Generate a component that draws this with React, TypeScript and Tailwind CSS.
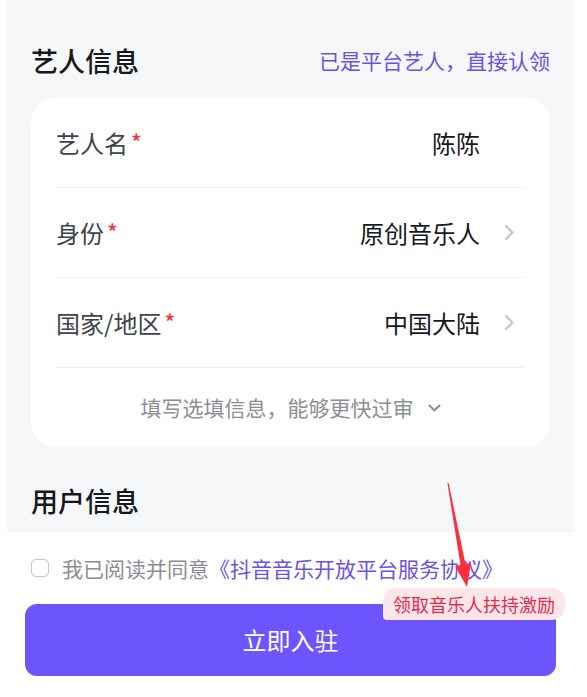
import React from 'react';

const font = { fontFamily: '"Noto Sans CJK SC", "Noto Sans", sans-serif' };

const ChevronRight = () => (
  <svg width="11" height="17" viewBox="0 0 11 17" fill="none">
    <path d="M2 2l6.5 6.5L2 15" stroke="#c4c7cc" strokeWidth="2.4" strokeLinecap="round" strokeLinejoin="round" />
  </svg>
);

const ChevronDown = () => (
  <svg width="13" height="8" viewBox="0 0 13 8" fill="none">
    <path d="M1.5 1.5l5 5 5-5" stroke="#8b8e93" strokeWidth="2" strokeLinecap="round" strokeLinejoin="round" />
  </svg>
);

interface RowProps {
  label: string;
  value: string;
  arrow?: boolean;
}

const FormRow: React.FC<RowProps> = ({ label, value, arrow = true }) => (
  <div className="flex h-[90px] items-center border-b border-[#eff0f2]">
    <div className="flex flex-1 items-center text-[24px] leading-none text-[#40444a]">
      {label}
      <span className="ml-[3px] -mt-[4px] text-[22px] font-medium text-[#f0344a]">*</span>
    </div>
    <div className="text-[24px] leading-none text-[#16181c]">{value}</div>
    <div className="flex w-[45px] items-center pl-[24px]">{arrow && <ChevronRight />}</div>
  </div>
);

export default function App() {
  return (
    <div className="relative h-[697px] w-[587px] overflow-hidden bg-white" style={font}>
      {/* Gray form area */}
      <div className="mx-[7px] h-[532px] w-[567px] bg-[#f6f7f9] px-[24px] pt-[43px]">
        <div className="flex h-[36px] items-center justify-between">
          <h2 className="text-[27px] font-medium text-[#16181c]">艺人信息</h2>
          <span className="text-[21px] text-[#6a52e8]">已是平台艺人，直接认领</span>
        </div>

        <div className="mt-[19px] rounded-[24px] bg-white px-[25px]">
          <FormRow label="艺人名" value="陈陈" arrow={false} />
          <FormRow label="身份" value="原创音乐人" />
          <FormRow label="国家/地区" value="中国大陆" />
          <div className="flex h-[79px] items-center justify-center gap-[14px] text-[21px] text-[#8b8e93]">
            <span>填写选填信息，能够更快过审</span>
            <ChevronDown />
          </div>
        </div>

        <div className="mt-[36px] flex h-[36px] items-center">
          <h2 className="text-[27px] font-medium text-[#16181c]">用户信息</h2>
        </div>
      </div>

      {/* Agreement */}
      <div className="mt-[22px] flex h-[28px] items-center gap-[13px] pl-[31px]">
        <div className="h-[18px] w-[18px] rounded-[5px] border-[1.5px] border-[#c5c8cc] bg-white" />
        <div className="text-[21px] leading-none">
          <span className="text-[#8a8d92]">我已阅读并同意</span>
          <span className="text-[#6a52e8]">《抖音音乐开放平台服务协议》</span>
        </div>
      </div>

      {/* Submit */}
      <div className="mt-[22px] px-[25px]">
        <button className="flex h-[72px] w-[531px] items-center justify-center rounded-[12px] bg-[#6c55fc] text-[24px] text-white">
          立即入驻
        </button>
      </div>

      {/* Promo badge */}
      <div className="absolute left-[383px] top-[588px] flex h-[32px] w-[182px] items-center justify-center rounded-tl-[14px] rounded-tr-[14px] rounded-br-[14px] rounded-bl-[4px] bg-[#fde6ea] text-[18px] text-[#e32c4c]">
        领取音乐人扶持激励
      </div>

      {/* Annotation arrow */}
      <svg className="pointer-events-none absolute left-0 top-0" width="587" height="697">
        <polygon
          points="448.6,483 465.5,564 471,563 467,587 455,566 460.5,564.9 447.4,483"
          fill="#ff2e3a"
        />
      </svg>
    </div>
  );
}
